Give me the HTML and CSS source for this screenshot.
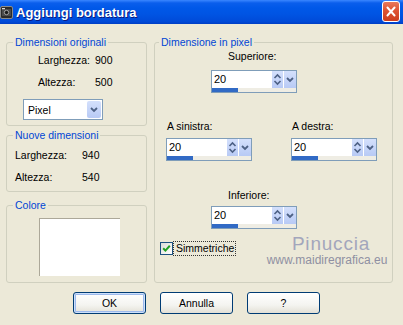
FILE: index.html
```html
<!DOCTYPE html>
<html>

<head>
  <title>Aggiungi bordatura</title>
  <link rel="stylesheet" href="styles.css">
</head>

<body>
  <div id="titlebar">
    <svg class="app-icon" width="13" height="13" viewBox="0 0 13 13">
      <rect x="0.5" y="0.5" width="12" height="12" rx="1.5" fill="#2b2b2b" stroke="#8a8a8a"/>
      <rect x="2" y="3" width="9" height="7" fill="#4a4a4a"/>
      <circle cx="6.5" cy="6.5" r="2.2" fill="#1a1a1a" stroke="#bdbdbd" stroke-width="0.8"/>
      <rect x="2" y="2" width="3" height="1.2" fill="#dcdcdc"/>
    </svg>
    <span class="title">Aggiungi bordatura</span>
    <span class="close">
      <svg width="18" height="21" viewBox="0 0 18 21">
        <path d="M5 6 L13 15 M13 6 L5 15" stroke="#fff" stroke-width="2.2" stroke-linecap="round"/>
      </svg>
    </span>
  </div>

  <div id="main">
    <div class="left">
      <fieldset class="group g-orig">
        <legend>Dimensioni originali</legend>
        <div class="dims">
          <span>Larghezza:</span><span>900</span>
          <span>Altezza:</span><span>500</span>
        </div>
        <div class="select">
          <span>Pixel</span>
          <span class="drop">
            <svg width="14" height="17" viewBox="0 0 14 17"><path d="M4 7 L7 10 L10 7" fill="none" stroke="#4d6185" stroke-width="1.8"/></svg>
          </span>
        </div>
      </fieldset>

      <fieldset class="group g-new">
        <legend>Nuove dimensioni</legend>
        <div class="dims">
          <span>Larghezza:</span><span>940</span>
          <span>Altezza:</span><span>540</span>
        </div>
      </fieldset>

      <fieldset class="group g-color">
        <legend>Colore</legend>
        <div class="swatch"></div>
      </fieldset>
    </div>

    <fieldset class="group g-pixel">
      <legend>Dimensione in pixel</legend>

      <div class="side side-top">
        <div class="lbl">Superiore:</div>
        <div class="spin">
          <div class="spin-row">
            <span class="val">20</span>
            <span class="arrows">
              <svg width="11" height="17" viewBox="0 0 11 17"><path d="M2.5 7 L5.5 4 L8.5 7 M2.5 10 L5.5 13 L8.5 10" fill="none" stroke="#4d6185" stroke-width="1.6"/></svg>
            </span>
            <span class="drop">
              <svg width="12" height="17" viewBox="0 0 12 17"><path d="M3 7 L6 10 L9 7" fill="none" stroke="#4d6185" stroke-width="1.8"/></svg>
            </span>
          </div>
          <div class="track"><div class="bar" style="width: 26px"></div></div>
        </div>
      </div>

      <div class="pair">
        <div class="side">
          <div class="lbl">A sinistra:</div>
          <div class="spin">
            <div class="spin-row">
              <span class="val">20</span>
              <span class="arrows">
                <svg width="11" height="17" viewBox="0 0 11 17"><path d="M2.5 7 L5.5 4 L8.5 7 M2.5 10 L5.5 13 L8.5 10" fill="none" stroke="#4d6185" stroke-width="1.6"/></svg>
              </span>
              <span class="drop">
                <svg width="12" height="17" viewBox="0 0 12 17"><path d="M3 7 L6 10 L9 7" fill="none" stroke="#4d6185" stroke-width="1.8"/></svg>
              </span>
            </div>
            <div class="track"><div class="bar" style="width: 26px"></div></div>
          </div>
        </div>
        <div class="side">
          <div class="lbl">A destra:</div>
          <div class="spin">
            <div class="spin-row">
              <span class="val">20</span>
              <span class="arrows">
                <svg width="11" height="17" viewBox="0 0 11 17"><path d="M2.5 7 L5.5 4 L8.5 7 M2.5 10 L5.5 13 L8.5 10" fill="none" stroke="#4d6185" stroke-width="1.6"/></svg>
              </span>
              <span class="drop">
                <svg width="12" height="17" viewBox="0 0 12 17"><path d="M3 7 L6 10 L9 7" fill="none" stroke="#4d6185" stroke-width="1.8"/></svg>
              </span>
            </div>
            <div class="track"><div class="bar" style="width: 26px"></div></div>
          </div>
        </div>
      </div>

      <div class="side side-bottom">
        <div class="lbl">Inferiore:</div>
        <div class="spin">
          <div class="spin-row">
            <span class="val">20</span>
            <span class="arrows">
              <svg width="11" height="17" viewBox="0 0 11 17"><path d="M2.5 7 L5.5 4 L8.5 7 M2.5 10 L5.5 13 L8.5 10" fill="none" stroke="#4d6185" stroke-width="1.6"/></svg>
            </span>
            <span class="drop">
              <svg width="12" height="17" viewBox="0 0 12 17"><path d="M3 7 L6 10 L9 7" fill="none" stroke="#4d6185" stroke-width="1.8"/></svg>
            </span>
          </div>
          <div class="track"><div class="bar" style="width: 26px"></div></div>
        </div>
      </div>

      <div class="check">
        <span class="box">
          <svg width="11" height="11" viewBox="0 0 11 11"><path d="M2.2 5.2 L4.4 7.6 L8.8 2.8" fill="none" stroke="#21a121" stroke-width="2"/></svg>
        </span>
        <span class="check-label">Simmetriche</span>
      </div>

      <div class="watermark">
        <div class="wm-name">Pinuccia</div>
        <div class="wm-site">www.maidiregrafica.eu</div>
      </div>
    </fieldset>
  </div>

  <div id="buttons">
    <button class="default">OK</button>
    <button>Annulla</button>
    <button>?</button>
  </div>
</body>

</html>
```

FILE: styles.css
```css
html, body {
  padding: 0;
  margin: 0;
  width: 403px;
  height: 325px;
  overflow: hidden;
  background: #ece9d8;
  font-family: "Liberation Sans", Arial, sans-serif;
  font-size: 10.5px;
  color: black;
}
#titlebar {
  height: 24px;
  display: flex;
  align-items: center;
  background: linear-gradient(to bottom, #3a86ff 0, #0a5eec 3px, #0058e8 8px, #0054e3 60%, #004ad8 90%, #003ec4 100%);
}
#titlebar .app-icon {
  margin-top: 1px;
}
#titlebar .title {
  margin-left: 3px;
  font-size: 13px;
  font-weight: bold;
  color: white;
  text-shadow: 1px 1px 0 #0a1a80;
}
#titlebar .close {
  margin-left: auto;
  margin-right: 3px;
  align-self: flex-start;
  margin-top: 1px;
  width: 18px;
  height: 21px;
  border: 1px solid white;
  border-radius: 3px;
  box-sizing: border-box;
  display: flex;
  align-items: center;
  justify-content: center;
  background: linear-gradient(to bottom, #e8795c 0, #df5636 40%, #cc3d1c 100%);
}
#main {
  display: flex;
  gap: 7px;
  padding: 12px 0 0 6px;
}
.left {
  width: 141px;
  display: flex;
  flex-direction: column;
}
.group {
  margin: 0;
  padding: 0;
  min-width: 0;
  border: 1px solid #d0d0bf;
  border-radius: 3px;
  box-sizing: border-box;
}
.group legend {
  padding: 0 2px;
  margin-left: 6px;
  line-height: 13px;
  color: #0046d5;
}
.g-orig {
  height: 90px;
}
.g-new {
  height: 63px;
  margin-top: 3px;
}
.g-color {
  height: 84px;
  margin-top: 7px;
}
.g-pixel {
  position: relative;
  width: 239px;
  height: 247px;
}
.g-pixel legend {
  margin-left: 4px;
}
.dims {
  display: grid;
  grid-template-columns: 57px auto;
  line-height: 22px;
  padding-left: 31px;
}
.g-new .dims {
  grid-template-columns: 67px auto;
  padding-left: 8px;
  margin-top: 2px;
}
.select {
  margin: 6px 0 0 16px;
  width: 80px;
  height: 21px;
  border: 1px solid #7f9db9;
  background: white;
  box-sizing: border-box;
  display: flex;
  align-items: center;
  padding-left: 4px;
}
.select .drop {
  margin-left: auto;
  margin-right: 1px;
  width: 14px;
  height: 17px;
  display: flex;
  background: linear-gradient(to bottom, #d4e0fc, #b8caf5);
  border-radius: 2px;
}
.swatch {
  margin: 6px 0 0 32px;
  width: 81px;
  height: 58px;
  background: white;
  border-top: 1px solid #aca899;
  border-left: 1px solid #aca899;
  box-sizing: border-box;
}
.side {
  width: 86px;
}
.side .lbl {
  line-height: 13px;
  padding-left: 1px;
}
.side-top {
  margin: 1px 0 0 56px;
}
.side-top .lbl,
.side-bottom .lbl {
  padding-left: 17px;
}
.side-top .spin {
  margin-top: 7px;
}
.pair {
  display: flex;
  gap: 39px;
  margin: 27px 0 0 11px;
}
.pair .spin {
  margin-top: 5px;
}
.side-bottom {
  margin: 28px 0 0 56px;
}
.side-bottom .spin {
  margin-top: 4px;
}
.spin {
  height: 23px;
  border: 1px solid #7f9db9;
  background: white;
  box-sizing: border-box;
  display: flex;
  flex-direction: column;
}
.spin-row {
  height: 17px;
  display: flex;
}
.spin .val {
  flex: 1;
  padding-left: 2px;
  line-height: 17px;
  font-size: 11px;
}
.spin .arrows,
.spin .drop {
  display: flex;
  background: linear-gradient(to bottom, #d4e0fc, #b8caf5);
}
.spin .arrows {
  width: 11px;
  margin-right: 1px;
}
.spin .drop {
  width: 12px;
}
.track {
  height: 4px;
  background: #efede4;
}
.track .bar {
  height: 100%;
  background: #316ac5;
}
.check {
  display: flex;
  align-items: center;
  margin: 12px 0 0 5px;
}
.check .box {
  width: 13px;
  height: 13px;
  border: 1px solid #1c5180;
  box-sizing: border-box;
  background: linear-gradient(135deg, #dcdcd6, #ffffff);
  display: flex;
}
.check .check-label {
  margin-left: 0;
  height: 15px;
  line-height: 13px;
  padding: 0 1px 0 2px;
  border: 1px dotted #333;
  box-sizing: border-box;
}
.watermark {
  position: absolute;
  left: 110px;
  top: 185px;
  width: 124px;
  text-align: center;
  color: #a3a6bc;
}
.wm-name {
  font-size: 19px;
  line-height: 20px;
  letter-spacing: 0.8px;
  padding-left: 8px;
}
.wm-site {
  font-size: 12px;
  line-height: 12px;
  color: #8f90a2;
}
#buttons {
  display: flex;
  gap: 14px;
  padding: 9px 0 0 73px;
}
#buttons button {
  width: 73px;
  height: 22px;
  margin: 0;
  padding: 0;
  border: 1px solid #003c74;
  border-radius: 3px;
  font-family: inherit;
  font-size: 10.5px;
  color: black;
  background: linear-gradient(to bottom, #ffffff 0, #f4f4f0 60%, #e3e0d6 100%);
}
#buttons button.default {
  box-shadow: inset 0 0 0 1px #cde0fb, inset 0 0 0 2px #9cb9ec;
}
```
